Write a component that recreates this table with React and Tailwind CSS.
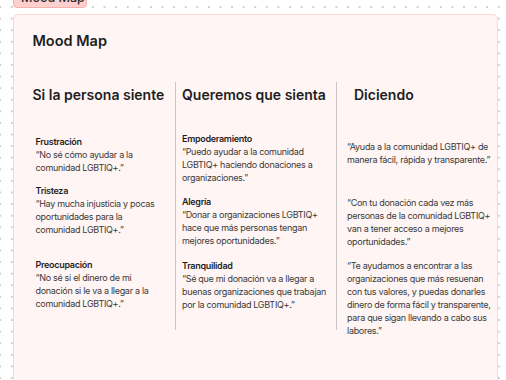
const columns = [
  {
    title: 'Si la persona siente',
    className: 'w-[142px] pl-0',
    headPad: 'pl-0',
    itemPad: 'pl-[3px]',
    items: [
      { mt: 'mt-[30px]', head: 'Frustración', lines: ['“No sé cómo ayudar a la', 'comunidad LGBTIQ+.”'] },
      { mt: 'mt-[10px]', head: 'Tristeza', lines: ['“Hay mucha injusticia y pocas', 'oportunidades para la', 'comunidad LGBTIQ+.”'] },
      { mt: 'mt-[22px]', head: 'Preocupación', lines: ['“No sé si el dinero de mi', 'donación si le va a llegar a la', 'comunidad LGBTIQ+.”'] },
    ],
  },
  {
    title: 'Queremos que sienta',
    className: 'w-[161px] border-l-[1.5px] border-[#c9c6c5]',
    headPad: 'pl-[6.5px]',
    itemPad: 'pl-[6.5px]',
    items: [
      { mt: 'mt-[27px]', head: 'Empoderamiento', lines: ['“Puedo ayudar a la comunidad', 'LGBTIQ+ haciendo donaciones a', 'organizaciones.”'] },
      { mt: 'mt-[11px]', head: 'Alegría', lines: ['“Donar a organizaciones LGBTIQ+', 'hace que más personas tengan', 'mejores oportunidades.”'] },
      { mt: 'mt-[12px]', head: 'Tranquilidad', lines: ['“Sé que mi donación va a llegar a', 'buenas organizaciones que trabajan', 'por la comunidad LGBTIQ+.”'] },
    ],
  },
  {
    title: 'Diciendo',
    className: 'flex-1 border-l-[1.5px] border-[#c9c6c5]',
    headPad: 'pl-[17.5px]',
    itemPad: 'pl-[10.5px]',
    items: [
      { mt: 'mt-[35.5px]', lines: ['“Ayuda a la comunidad LGBTIQ+ de', 'manera fácil, rápida y transparente.”'] },
      { mt: 'mt-[30px]', lines: ['“Con tu donación cada vez más', 'personas de la comunidad LGBTIQ+', 'van a tener acceso a mejores', 'oportunidades.”'] },
      { mt: 'mt-[10.5px]', lines: ['“Te ayudamos a encontrar a las', 'organizaciones que más resuenan', 'con tus valores, y puedas donarles', 'dinero de forma fácil y transparente,', 'para que sigan llevando a cabo sus', 'labores.”'] },
    ],
  },
];

function Entry({ item, pad }) {
  return (
    <div className={`${item.mt} ${pad} text-[9px] leading-[13px] tracking-[-0.3px] whitespace-nowrap`}>
      {item.head && <div className="font-semibold text-[#1f1f1f]">{item.head}</div>}
      {item.lines.map((line) => (
        <div key={line} className="text-[#3a3a3a]">{line}</div>
      ))}
    </div>
  );
}

export default function App() {
  return (
    <div className="flex h-screen w-full flex-col overflow-hidden bg-white bg-[radial-gradient(circle,#cfcfcf_0.7px,transparent_1.1px)] [background-size:11.6px_11.6px] [background-position:-5.6px_1.2px] font-['Inter','Noto_Sans',sans-serif]">
      <div className="ml-[13px] -mt-[12px] flex h-[20px] w-[74px] shrink-0 items-center rounded-[4px] border border-[#f4b1ae] bg-[#fdd0ce] pl-[7px] text-[12.5px] font-medium text-[#2a2a2a]">
        Mood Map
      </div>
      <div className="ml-[13px] mt-[6px] h-[420px] w-[485px] shrink-0 rounded-[5px] border-[1.5px] border-[#fbd6d3] bg-[#fff5f4] pl-[18.5px] pt-[15.5px]">
        <h1 className="text-[14.5px] leading-[20px] font-semibold text-[#1e1e1e]">Mood Map</h1>
        <div className="mt-[31px] flex h-[248px]">
          {columns.map((col) => (
            <div key={col.title} className={col.className}>
              <h2 className={`${col.headPad} pt-[3px] text-[14px] leading-[20px] font-semibold text-[#1e1e1e] whitespace-nowrap`}>
                {col.title}
              </h2>
              {col.items.map((item, i) => (
                <Entry key={i} item={item} pad={col.itemPad} />
              ))}
            </div>
          ))}
        </div>
      </div>
    </div>
  );
}
